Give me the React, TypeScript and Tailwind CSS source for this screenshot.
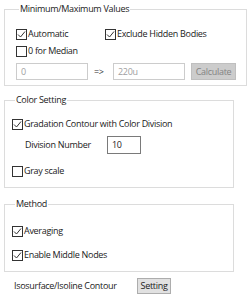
const CheckBox = ({ checked, label }: { checked: boolean; label: string }) => (
  <label className="flex items-center h-[12px]">
    <span className="w-[11px] h-[11px] border border-[#333333] bg-white flex items-center justify-center shrink-0">
      {checked && (
        <svg width="9" height="9" viewBox="0 0 9 9">
          <path d="M1 4.5 L3.5 7 L8 1.5" fill="none" stroke="#333333" strokeWidth="1" />
        </svg>
      )}
    </span>
    <span className="ml-[1px] leading-[12px] whitespace-nowrap">{label}</span>
  </label>
);

const Group = ({ title, className, children }: { title: string; className: string; children: React.ReactNode }) => (
  <fieldset className={`border border-[#dcdcdc] ${className}`}>
    <legend className="ml-[3px] px-[1px] leading-[14px] whitespace-nowrap">{title}</legend>
    {children}
  </fieldset>
);

export default function App() {
  return (
    <div className="w-[251px] h-[306px] bg-white text-[9px] text-[#1a1a1a] font-['Open_Sans',sans-serif] tracking-[-0.3px] pt-[2px] pl-[4px]">
      <Group title="Minimum/Maximum Values" className="w-[243px] pl-[11px] pb-[5px]">
        <div className="flex mt-[12px]">
          <div className="w-[89px]">
            <CheckBox checked label="Automatic" />
          </div>
          <CheckBox checked label="Exclude Hidden Bodies" />
        </div>
        <div className="mt-[5px]">
          <CheckBox checked={false} label="0 for Median" />
        </div>
        <div className="flex items-center mt-[6px] h-[17px]">
          <div className="w-[72px] h-[17px] border border-[#cccccc] text-[#a0a0a0] pl-[4px] leading-[15px]">0</div>
          <span className="w-[25px] pl-[6px] text-[#333333]">=&gt;</span>
          <div className="w-[72px] h-[17px] border border-[#cccccc] text-[#a0a0a0] pl-[4px] leading-[15px]">220u</div>
          <div className="ml-[6px] w-[45px] h-[17px] border border-[#bfbfbf] bg-[#cccccc] text-[#838383] text-center leading-[15px]">
            Calculate
          </div>
        </div>
      </Group>

      <Group title="Color Setting" className="mt-[7px] w-[230px] pl-[7px] pb-[10px]">
        <div className="mt-[11px]">
          <CheckBox checked label="Gradation Contour with Color Division" />
        </div>
        <div className="flex items-center mt-[6px] h-[18px]">
          <span className="w-[95px] pl-[13px] whitespace-nowrap">Division Number</span>
          <div className="w-[34px] h-[18px] border border-[#7a7a7a] pl-[4px] leading-[16px]">10</div>
        </div>
        <div className="mt-[11px]">
          <CheckBox checked={false} label="Gray scale" />
        </div>
      </Group>

      <Group title="Method" className="mt-[9px] w-[230px] pl-[7px] pb-[10px]">
        <div className="mt-[14px]">
          <CheckBox checked label="Averaging" />
        </div>
        <div className="mt-[12px]">
          <CheckBox checked label="Enable Middle Nodes" />
        </div>
      </Group>

      <div className="flex items-center mt-[6px] h-[16px]">
        <span className="w-[133px] pl-[10px] whitespace-nowrap">Isosurface/Isoline Contour</span>
        <div className="w-[34px] h-[16px] border border-[#adadad] bg-[#e1e1e1] text-center leading-[14px]">Setting</div>
      </div>
    </div>
  );
}
